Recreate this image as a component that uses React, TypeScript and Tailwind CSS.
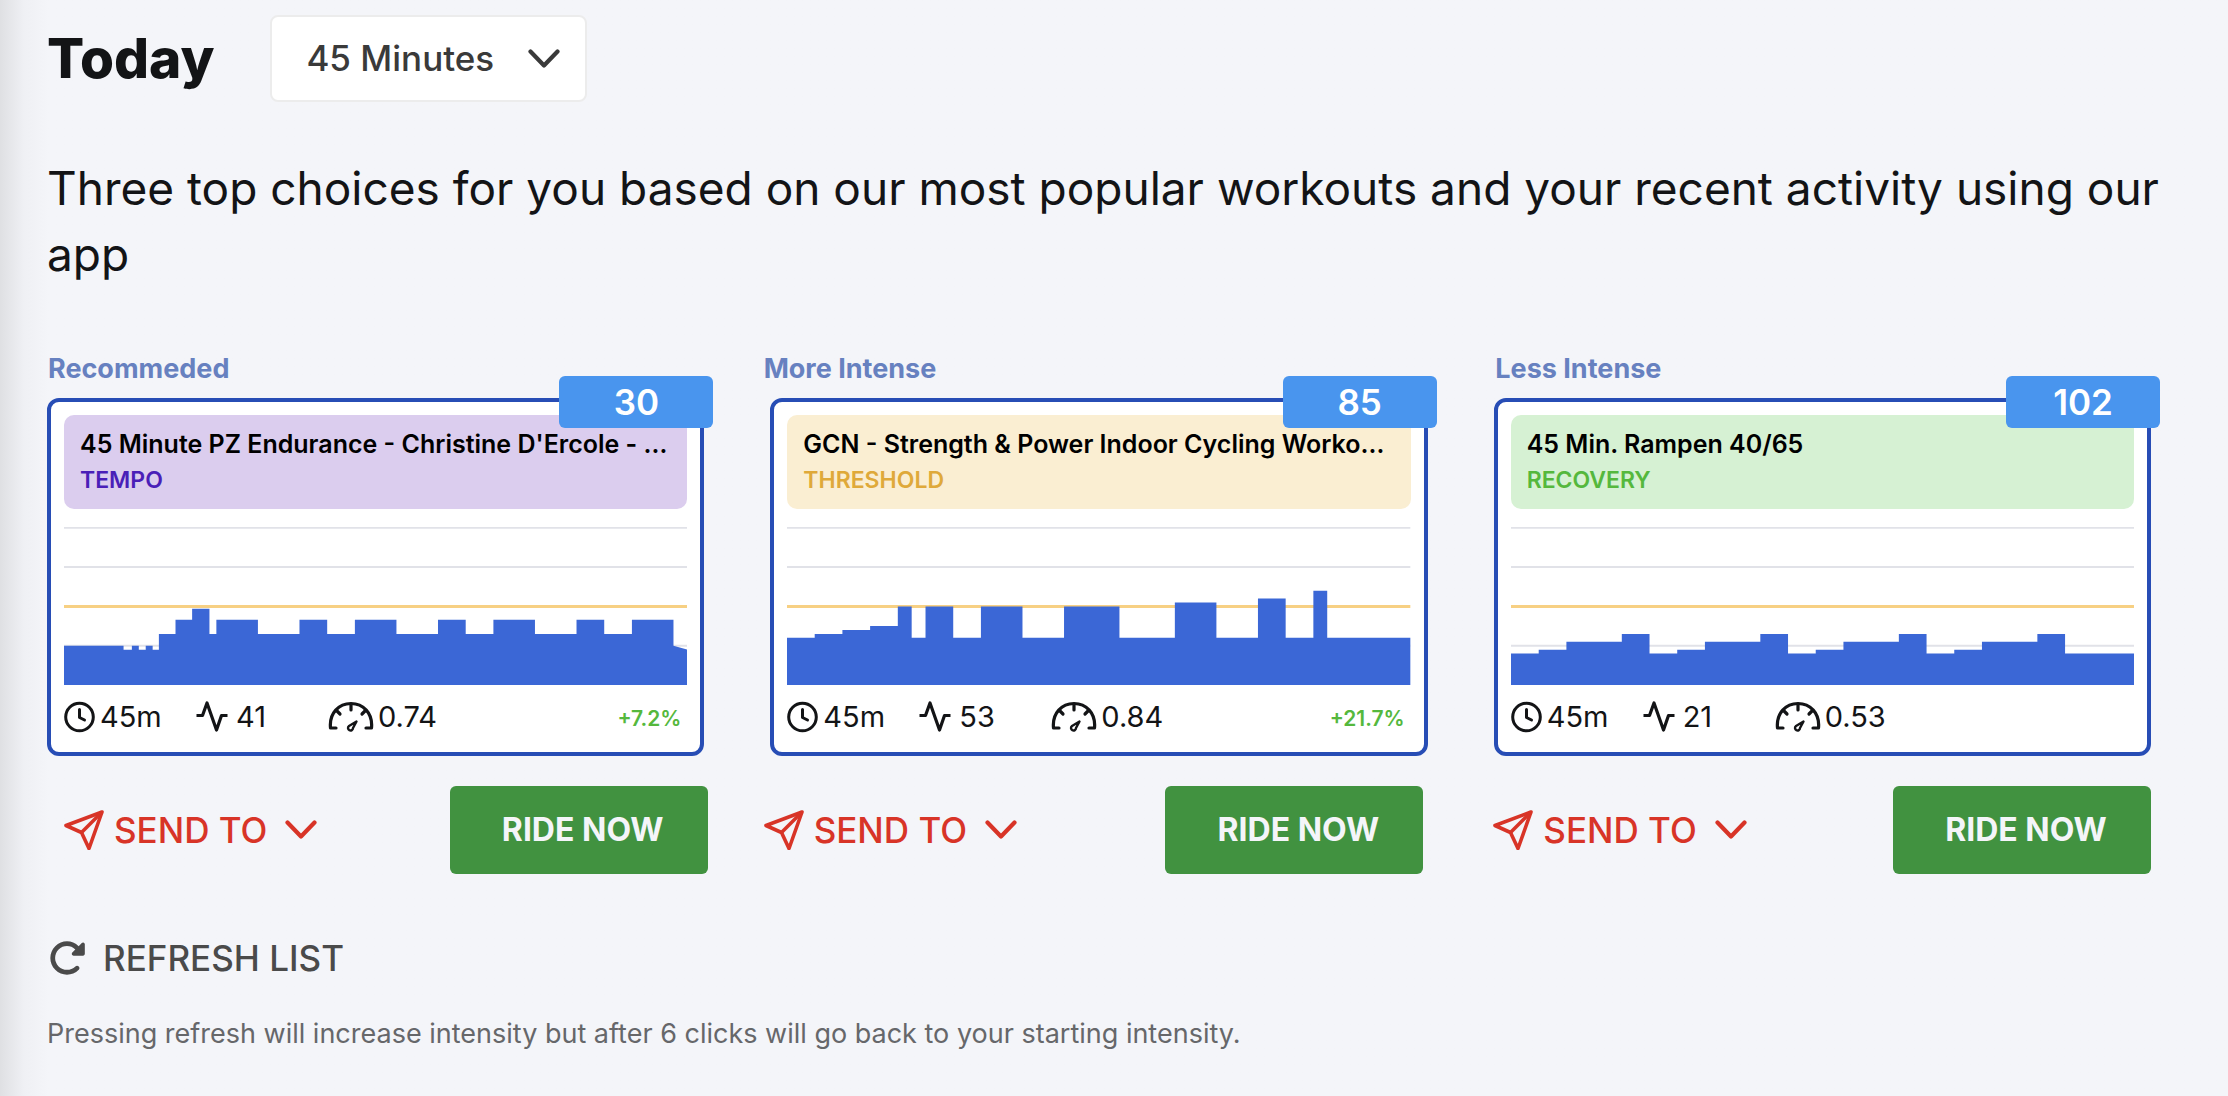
import { useState } from 'react'
import { FaRotateRight } from 'react-icons/fa6'

// [end minute, % of FTP]
type Step = [number, number]

type Workout = {
  label: string
  title: string
  zone: string
  headClass: string
  zoneClass: string
  score: number
  time: string
  load: number
  factor: string
  change?: string
  steps: Step[]
  tail?: [number, number]
}

const workouts: Workout[] = [
  {
    label: 'Recommeded',
    title: "45 Minute PZ Endurance - Christine D'Ercole - …",
    zone: 'TEMPO',
    headClass: 'bg-[#dbcdee]',
    zoneClass: 'text-[#4a1fb8]',
    score: 30,
    time: '45m',
    load: 41,
    factor: '0.74',
    change: '+7.2%',
    steps: [
      [4.3, 50], [4.9, 45], [5.4, 50], [5.9, 45], [6.4, 50], [6.85, 45], [8.05, 65], [9.25, 83],
      [10.5, 97], [11, 65], [14, 83], [17, 65], [19, 83], [21, 65], [24, 83], [27, 65], [29, 83],
      [31, 65], [34, 83], [37, 65], [39, 83], [41, 65], [44, 83],
    ],
    tail: [50, 45],
  },
  {
    label: 'More Intense',
    title: 'GCN - Strength & Power Indoor Cycling Worko…',
    zone: 'THRESHOLD',
    headClass: 'bg-[#faeed2]',
    zoneClass: 'text-[#dfa93a]',
    score: 85,
    time: '45m',
    load: 53,
    factor: '0.84',
    change: '+21.7%',
    steps: [
      [2, 60], [4, 65], [6, 70], [8, 75], [9, 100], [10, 60], [12, 100], [14, 60], [17, 100],
      [20, 60], [24, 100], [28, 60], [31, 105], [34, 60], [36, 110], [38, 60], [39, 120], [45, 60],
    ],
  },
  {
    label: 'Less Intense',
    title: '45 Min. Rampen 40/65',
    zone: 'RECOVERY',
    headClass: 'bg-[#d6f1d3]',
    zoneClass: 'text-[#55b83d]',
    score: 102,
    time: '45m',
    load: 21,
    factor: '0.53',
    steps: [
      [2, 40], [4, 45], [8, 55], [10, 65], [12, 40], [14, 45], [18, 55], [20, 65], [22, 40],
      [24, 45], [28, 55], [30, 65], [32, 40], [34, 45], [38, 55], [40, 65], [45, 40],
    ],
  },
]

const CHART_TOP = 201

function Chart({ steps, tail }: { steps: Step[]; tail?: [number, number] }) {
  let d = `M0 ${CHART_TOP}`
  for (const [end, pct] of steps) d += `V${CHART_TOP - pct}H${end}`
  if (tail) d += `V${CHART_TOP - tail[0]}L45 ${CHART_TOP - tail[1]}`
  d += `V${CHART_TOP}Z`
  return (
    <svg className="mt-[18px] block h-[158px] w-full" viewBox={`0 0 45 ${CHART_TOP}`} preserveAspectRatio="none" aria-hidden="true">
      {[50, 150, 200].map((y) => (
        <line key={y} x1="0" x2="45" y1={CHART_TOP - y} y2={CHART_TOP - y} stroke="#e1e2e8" strokeWidth="2" vectorEffect="non-scaling-stroke" />
      ))}
      <line x1="0" x2="45" y1={CHART_TOP - 100} y2={CHART_TOP - 100} stroke="#f7d083" strokeWidth="3" vectorEffect="non-scaling-stroke" />
      <path d={d} fill="#3b67d6" />
    </svg>
  )
}

function ClockIcon() {
  return (
    <svg className="h-8 w-8 shrink-0" viewBox="0 0 32 32" fill="none" stroke="currentColor" strokeWidth="3" strokeLinecap="round" strokeLinejoin="round">
      <circle cx="15.5" cy="16" r="13.8" />
      <path d="M15.500 8.500v8l5 2.500" />
    </svg>
  )
}

function PulseIcon() {
  return (
    <svg className="h-8 w-8 shrink-0" viewBox="0 0 32 32" fill="none" stroke="currentColor" strokeWidth="3.2" strokeLinejoin="round">
      <path d="M.5 14.500h6L11 2l9.500 27L25.500 14.500H31.500" />
    </svg>
  )
}

function GaugeIcon() {
  return (
    <svg className="h-8 w-[46px] shrink-0" viewBox="0 0 46 32" fill="none" stroke="currentColor" strokeWidth="3.2" strokeLinecap="round" strokeLinejoin="round">
      <path d="M8 27H2.500C1 12 11 2.500 23 2.500S45 12 43.500 27H38" />
      <path d="M23 3v6M8.500 9.500l3.500 3.500M37.500 9.500L34 13" />
      <path d="M28.500 20.500l-7.500 4.500a2.500 2.500 0 1 0 4 2z" strokeWidth="2.400" />
    </svg>
  )
}

function SendIcon() {
  return (
    <svg className="h-10 w-10 shrink-0" viewBox="0 0 40 40" fill="none" stroke="currentColor" strokeWidth="3.600" strokeLinejoin="round">
      <path d="M38 2L2 15.500l15.500 7L25 38.500z" />
      <path d="M17.500 22.500L38 2" />
    </svg>
  )
}

function Chevron({ className }: { className: string }) {
  return (
    <svg className={className} viewBox="0 0 32 20" fill="none" stroke="currentColor" strokeWidth="4.2" strokeLinecap="round" strokeLinejoin="round">
      <path d="M2.500 2.500L16 16.500L29.500 2.500" />
    </svg>
  )
}

function WorkoutCard({ w }: { w: Workout }) {
  return (
    <article className="relative min-w-0 rounded-xl border-4 border-[#274db5] bg-white px-[13px] pt-[13px] pb-[19px]">
      <div className={`rounded-[10px] px-4 pt-[11px] pb-[11px] font-semibold ${w.headClass}`}>
        <h3 className="truncate text-[25px] leading-9 text-black">{w.title}</h3>
        <p className={`text-[23px] leading-9 ${w.zoneClass}`}>{w.zone}</p>
      </div>
      <span className="absolute -top-[26px] -right-[13px] flex h-[52px] w-[154px] items-center justify-center rounded-md bg-[#4995ee] text-[35px] font-semibold text-white">
        {w.score}
      </span>
      <Chart steps={w.steps} tail={w.tail} />
      <div className="mt-4 flex h-8 items-center text-[29px] text-[#131416]">
        <span className="flex w-[132px] items-center gap-1">
          <ClockIcon />
          {w.time}
        </span>
        <span className="flex w-[132px] items-center gap-2">
          <PulseIcon />
          {w.load}
        </span>
        <span className="flex items-center gap-1">
          <GaugeIcon />
          {w.factor}
        </span>
        {w.change && <span className="mt-1 mr-1.5 ml-auto text-[21px] font-semibold text-[#55b83d]">{w.change}</span>}
      </div>
    </article>
  )
}

const actionPad = ['pr-14 pl-4', 'pr-[70px]', '']

export default function App() {
  const [minutes, setMinutes] = useState('45')

  return (
    <main className="min-h-screen bg-[#f4f5f9] bg-linear-to-r from-[#dfe0e3] via-[#eff0f4] via-[24px] to-[#f4f5f9] to-[48px] pr-12 pb-10 pl-[47px] font-['Inter','Liberation_Sans',sans-serif] text-[#131416]">
      <header className="flex items-center gap-14 pt-[15px]">
        <h1 className="text-[55px] leading-none font-extrabold">Today</h1>
        <div className="relative">
          <select
            aria-label="Workout length"
            value={minutes}
            onChange={(e) => setMinutes(e.target.value)}
            className="h-[87px] w-[317px] appearance-none rounded-lg border-2 border-[#ececec] bg-white pl-[34px] text-[35px] font-medium text-[#3a3a3a]"
          >
            <option value="30">30 Minutes</option>
            <option value="45">45 Minutes</option>
            <option value="60">60 Minutes</option>
          </select>
          <Chevron className="pointer-events-none absolute top-[34px] right-[27px] h-5 w-8 text-[#3a3a3a]" />
        </div>
      </header>

      <p className="mt-[53px] text-[46px] leading-[66px]">
        Three top choices for you based on our most popular workouts and your recent activity using our app
      </p>

      <div className="pr-[29px]">
        <div className="mt-[62px] grid grid-cols-[716fr_732fr_656fr] pl-px text-[27px] leading-10 font-bold text-[#6781c0]">
          {workouts.map((w) => (
            <h2 key={w.label}>{w.label}</h2>
          ))}
        </div>
        <div className="mt-[9px] grid grid-cols-3 gap-[66px]">
          {workouts.map((w) => (
            <WorkoutCard key={w.label} w={w} />
          ))}
        </div>
        <div className="mt-[30px] grid grid-cols-[716fr_730fr_658fr] pl-px">
          {workouts.map((w, i) => (
            <div key={w.label} className={`flex items-center justify-between ${actionPad[i]}`}>
              <button className="flex items-center gap-2.5 text-[35px] font-medium text-[#d83427]">
                <SendIcon />
                SEND TO
                <Chevron className="ml-2 h-5 w-8" />
              </button>
              <button className="h-[88px] w-[258px] rounded-md bg-[#419240] pl-2 text-[32px] font-bold text-[#f4f5f9]">RIDE NOW</button>
            </div>
          ))}
        </div>
      </div>

      <button className="mt-[60px] flex h-12 items-center gap-[17px] pl-px text-[35px] font-medium text-[#4a4a4a]">
        <FaRotateRight className="h-[38px] w-[38px]" />
        REFRESH LIST
      </button>
      <p className="mt-8 text-[27px] leading-10 text-[#66676a]">
        Pressing refresh will increase intensity but after 6 clicks will go back to your starting intensity.
      </p>
    </main>
  )
}
